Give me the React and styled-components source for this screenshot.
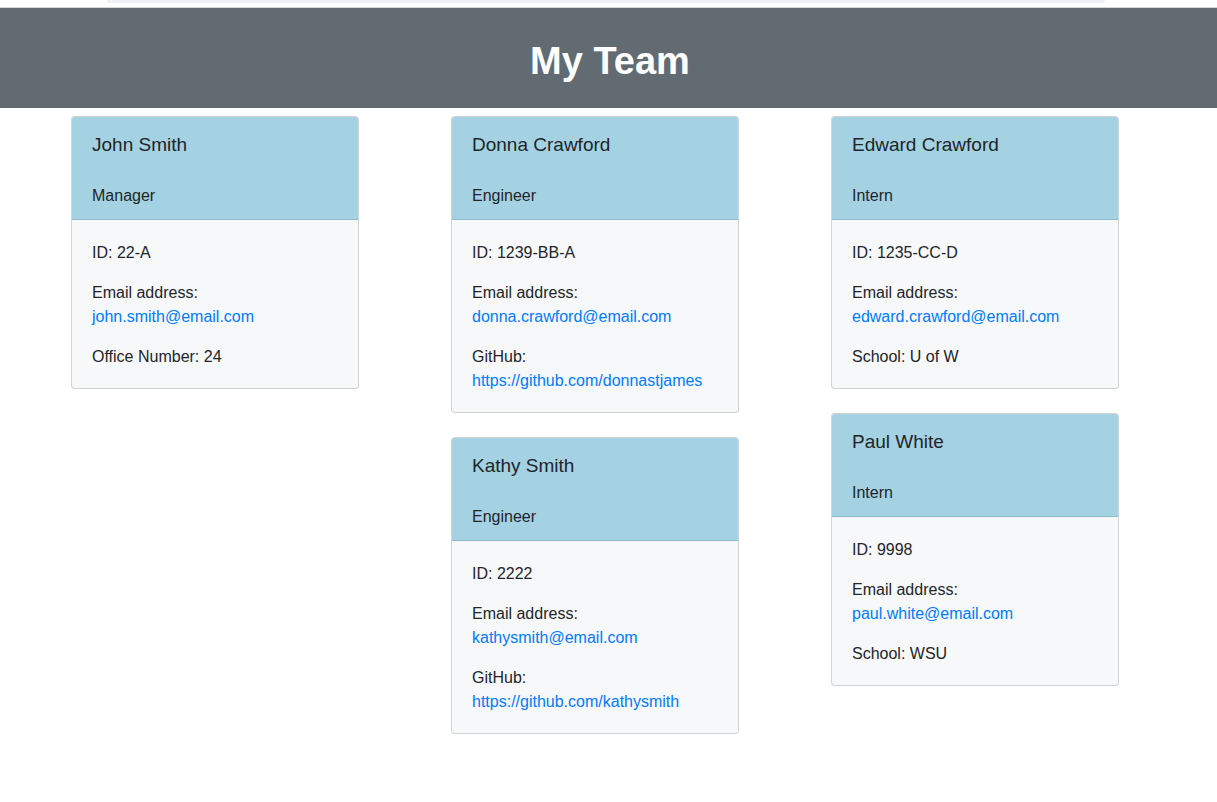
import React from 'react'
import styled, { createGlobalStyle } from 'styled-components'

const team = [
    [
        { name: 'John Smith', role: 'Manager', id: '22-A', email: 'john.smith@email.com', extra: { label: 'Office Number', value: '24' } },
    ],
    [
        { name: 'Donna Crawford', role: 'Engineer', id: '1239-BB-A', email: 'donna.crawford@email.com', github: 'https://github.com/donnastjames' },
        { name: 'Kathy Smith', role: 'Engineer', id: '2222', email: 'kathysmith@email.com', github: 'https://github.com/kathysmith' },
    ],
    [
        { name: 'Edward Crawford', role: 'Intern', id: '1235-CC-D', email: 'edward.crawford@email.com', extra: { label: 'School', value: 'U of W' } },
        { name: 'Paul White', role: 'Intern', id: '9998', email: 'paul.white@email.com', extra: { label: 'School', value: 'WSU' } },
    ],
]

function EmployeeCard({ person }) {
    return (
        <Card>
            <CardHeader>
                <Name>{person.name}</Name>
                <Role>{person.role}</Role>
            </CardHeader>
            <CardBody>
                <Line>ID: {person.id}</Line>
                <Line>
                    Email address:<br />
                    <Link href={`mailto:${person.email}`}>{person.email}</Link>
                </Line>
                {person.github ? (
                    <Line>
                        GitHub:<br />
                        <Link href={person.github}>{person.github}</Link>
                    </Line>
                ) : (
                    <Line>{person.extra.label}: {person.extra.value}</Line>
                )}
            </CardBody>
        </Card>
    )
}

function App() {
    return (
        <>
            <GlobalStyle />
            <TopStrip>
                <TopBar />
            </TopStrip>
            <Header>
                <Title>My Team</Title>
            </Header>
            <Container>
                {team.map((column, i) => (
                    <Column key={i}>
                        {column.map(person => (
                            <EmployeeCard key={person.name} person={person} />
                        ))}
                    </Column>
                ))}
            </Container>
        </>
    )
}

const GlobalStyle = createGlobalStyle`
    body {
        margin: 0;
        background: #fff;
        color: #212529;
        font-family: "Liberation Sans", Arial, sans-serif;
        font-size: 16px;
        line-height: 1.5;
    }
`

const TopStrip = styled.div`
    height: 7px;
    background: #fff;
    border-bottom: 1px solid #d4d6d8;
    display: flex;
    justify-content: center;
`

const TopBar = styled.div`
    width: 998px;
    height: 3px;
    margin-left: -6px;
    background: #eef0f3;
    border-radius: 0 0 6px 6px;
`

const Header = styled.header`
    height: 100px;
    background: #626a72;
    display: flex;
    align-items: center;
    justify-content: center;
`

const Title = styled.h1`
    margin: 0;
    color: #fff;
    font-size: 38px;
    font-weight: 700;
    line-height: 1.2;
    padding-top: 7px;
    padding-left: 3px;
`

const Container = styled.main`
    width: 1140px;
    margin: 0 auto;
    display: grid;
    grid-template-columns: repeat(3, 380px);
    align-items: start;
`

const Column = styled.div`
    display: flex;
    flex-direction: column;
    gap: 24px;
    padding: 8px 0 0 32.5px;
`

const Card = styled.div`
    width: 288px;
    box-sizing: border-box;
    border: 1px solid rgba(0, 0, 0, 0.15);
    border-radius: 4px;
    overflow: hidden;
    background: #f7f8fa;
`

const CardHeader = styled.div`
    background: #a4d2e2;
    border-bottom: 1px solid #8fbccc;
    padding: 16px 20px 11px;
`

const Name = styled.h5`
    margin: 0 0 27px;
    font-size: 19px;
    font-weight: 400;
    line-height: 24px;
`

const Role = styled.div`
    font-size: 16px;
    line-height: 24px;
`

const CardBody = styled.div`
    padding: 21px 20px 19px;
`

const Line = styled.p`
    margin: 0 0 16px;
    font-size: 16px;
    line-height: 24px;

    &:last-child {
        margin-bottom: 0;
    }
`

const Link = styled.a`
    color: #007bff;
    text-decoration: none;
`

export default App
